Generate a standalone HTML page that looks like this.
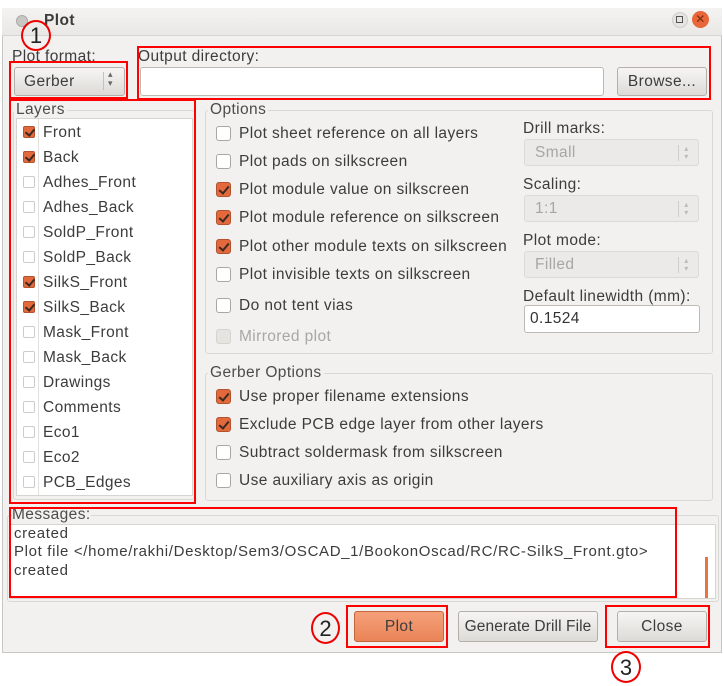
<!DOCTYPE html>
<html><head><meta charset="utf-8"><style>
*{box-sizing:border-box;margin:0;padding:0}
body{width:724px;height:686px;background:#fff;position:relative;overflow:hidden;font-family:"Liberation Sans","DejaVu Sans",sans-serif;font-size:15.5px;letter-spacing:0.4px;color:#3c3c3c}
.a{position:absolute}
.t{position:absolute;white-space:nowrap;line-height:18px}
.win{left:2px;top:8px;width:720px;height:645px;background:#f2f1f0;border:1px solid #c8c6c2}
.title{left:2px;top:8px;width:720px;height:28px;background:linear-gradient(#f4f3f1,#e9e8e5);border-bottom:1px solid #d6d4d0}
.red{position:absolute;border:2px solid #f00}
.circ{position:absolute;border:2px solid #e00;border-radius:50%;background:transparent;font-size:22px;letter-spacing:0;color:#222;text-align:center;font-family:"Liberation Sans",sans-serif}
.btn{position:absolute;border:1px solid #b3b0ab;border-radius:3px;background:linear-gradient(#f6f5f4,#dddbd7);text-align:center;line-height:28px;color:#3c3c3c}
.inp{position:absolute;background:#fff;border:1px solid #bdbab5;border-radius:3px}
.frame{position:absolute;border:1px solid #dad8d4;border-radius:3px}
.lbl{position:absolute;background:#f2f1f0;padding:0 2px;line-height:16px;color:#4c4c4c}
.cb{position:absolute;width:15px;height:15px;border:1px solid #aaa7a2;border-radius:3px;background:#fff}
.cb.on{background:#e3683c;border-color:#b2532d}
.cb.on::after{content:"";position:absolute;left:4px;top:1px;width:4px;height:8px;border:solid #3a2a22;border-width:0 2px 2px 0;transform:rotate(40deg)}
.sc{position:absolute;width:12px;height:12px;border:1px solid #ccc;border-radius:2px;background:#fff}
.sc.on{background:#e3683c;border-color:#b2532d}
.sc.on::after{content:"";position:absolute;left:3px;top:0px;width:4px;height:7px;border:solid #3a2a22;border-width:0 2px 2px 0;transform:rotate(40deg)}
.combo{position:absolute;border:1px solid #dcdad6;border-radius:3px;background:#ebeae8;color:#a8a6a2;line-height:26px;padding-left:10px}
.combo i{position:absolute;right:4px;top:5px;height:16px;border-left:1px solid #d0cecb;width:16px;font-style:normal;font-size:8px;line-height:8px;text-align:center;color:#bbb}
</style></head><body>
<div class="a win"></div>
<div class="a title"></div>
<div class="a" style="left:16px;top:15px;width:12px;height:12px;border-radius:50%;background:#c9c7c3;border:1px solid #aaa"></div>
<div class="t" style="left:44px;top:12px;font-weight:bold;color:#3c3c3c">Plot</div>
<div class="a" style="left:672px;top:12px;width:16px;height:16px;border-radius:50%;background:#e6e4e0;border:1px solid #ccc"></div>
<div class="a" style="left:676px;top:16px;width:7px;height:7px;border:1px solid #555"></div>
<div class="a" style="left:692px;top:11px;width:17px;height:17px;border-radius:50%;background:#e8663a;color:#7a2b10;font-size:12px;line-height:17px;text-align:center">✕</div>

<div class="t" style="left:12px;top:48px">Plot format:</div>
<div class="btn" style="left:14px;top:67px;width:111px;height:29px;text-align:left;padding-left:9px">Gerber</div>
<div class="a" style="left:103px;top:72px;height:18px;border-left:1px solid #c4c2be"></div>
<div class="t" style="left:108px;top:70px;font-size:9px;line-height:9px;color:#666">▴<br>▾</div>

<div class="t" style="left:138px;top:48px">Output directory:</div>
<div class="inp" style="left:140px;top:67px;width:464px;height:29px"></div>
<div class="btn" style="left:617px;top:67px;width:90px;height:29px">Browse...</div>

<div class="frame" style="left:13px;top:110px;width:182px;height:390px"></div>
<div class="lbl" style="left:14px;top:102px">Layers</div>
<div class="a" style="left:16px;top:118px;width:177px;height:378px;background:#fff;border:1px solid #d6d4d0"></div>
<div class="a" style="left:38px;top:119px;height:376px;border-left:1px solid #e3e1de"></div>
<div class="sc on" style="left:23px;top:126px"></div><div class="t" style="left:43px;top:124px">Front</div>
<div class="sc on" style="left:23px;top:151px"></div><div class="t" style="left:43px;top:149px">Back</div>
<div class="sc" style="left:23px;top:176px"></div><div class="t" style="left:43px;top:174px">Adhes_Front</div>
<div class="sc" style="left:23px;top:201px"></div><div class="t" style="left:43px;top:199px">Adhes_Back</div>
<div class="sc" style="left:23px;top:226px"></div><div class="t" style="left:43px;top:224px">SoldP_Front</div>
<div class="sc" style="left:23px;top:251px"></div><div class="t" style="left:43px;top:249px">SoldP_Back</div>
<div class="sc on" style="left:23px;top:276px"></div><div class="t" style="left:43px;top:274px">SilkS_Front</div>
<div class="sc on" style="left:23px;top:301px"></div><div class="t" style="left:43px;top:299px">SilkS_Back</div>
<div class="sc" style="left:23px;top:326px"></div><div class="t" style="left:43px;top:324px">Mask_Front</div>
<div class="sc" style="left:23px;top:351px"></div><div class="t" style="left:43px;top:349px">Mask_Back</div>
<div class="sc" style="left:23px;top:376px"></div><div class="t" style="left:43px;top:374px">Drawings</div>
<div class="sc" style="left:23px;top:401px"></div><div class="t" style="left:43px;top:399px">Comments</div>
<div class="sc" style="left:23px;top:426px"></div><div class="t" style="left:43px;top:424px">Eco1</div>
<div class="sc" style="left:23px;top:451px"></div><div class="t" style="left:43px;top:449px">Eco2</div>
<div class="sc" style="left:23px;top:476px"></div><div class="t" style="left:43px;top:474px">PCB_Edges</div>

<div class="frame" style="left:205px;top:110px;width:508px;height:244px"></div>
<div class="lbl" style="left:208px;top:102px">Options</div>
<div class="cb" style="left:216px;top:126px"></div><div class="t" style="left:239px;top:125px">Plot sheet reference on all layers</div>
<div class="cb" style="left:216px;top:154px"></div><div class="t" style="left:239px;top:153px">Plot pads on silkscreen</div>
<div class="cb on" style="left:216px;top:182px"></div><div class="t" style="left:239px;top:181px">Plot module value on silkscreen</div>
<div class="cb on" style="left:216px;top:210px"></div><div class="t" style="left:239px;top:209px">Plot module reference on silkscreen</div>
<div class="cb on" style="left:216px;top:239px"></div><div class="t" style="left:239px;top:238px">Plot other module texts on silkscreen</div>
<div class="cb" style="left:216px;top:267px"></div><div class="t" style="left:239px;top:266px">Plot invisible texts on silkscreen</div>
<div class="cb" style="left:216px;top:298px"></div><div class="t" style="left:239px;top:297px">Do not tent vias</div>
<div class="cb" style="left:216px;top:329px;background:#e6e4e1;border-color:#d6d4d0"></div><div class="t" style="left:239px;top:328px;color:#a9a7a3">Mirrored plot</div>

<div class="t" style="left:523px;top:120px">Drill marks:</div>
<div class="combo" style="left:524px;top:139px;width:175px;height:27px">Small<i>▴<br>▾</i></div>
<div class="t" style="left:523px;top:176px">Scaling:</div>
<div class="combo" style="left:524px;top:195px;width:175px;height:27px">1:1<i>▴<br>▾</i></div>
<div class="t" style="left:523px;top:232px">Plot mode:</div>
<div class="combo" style="left:524px;top:251px;width:175px;height:27px">Filled<i>▴<br>▾</i></div>
<div class="t" style="left:523px;top:288px">Default linewidth (mm):</div>
<div class="inp" style="left:524px;top:305px;width:176px;height:28px;padding-left:5px;line-height:26px;color:#333">0.1524</div>

<div class="frame" style="left:205px;top:373px;width:508px;height:128px"></div>
<div class="lbl" style="left:208px;top:365px">Gerber Options</div>
<div class="cb on" style="left:216px;top:389px"></div><div class="t" style="left:239px;top:388px">Use proper filename extensions</div>
<div class="cb on" style="left:216px;top:417px"></div><div class="t" style="left:239px;top:416px">Exclude PCB edge layer from other layers</div>
<div class="cb" style="left:216px;top:445px"></div><div class="t" style="left:239px;top:444px">Subtract soldermask from silkscreen</div>
<div class="cb" style="left:216px;top:473px"></div><div class="t" style="left:239px;top:472px">Use auxiliary axis as origin</div>

<div class="frame" style="left:7px;top:515px;width:712px;height:87px"></div>
<div class="lbl" style="left:12px;top:507px;padding:0">Messages:</div>
<div class="a" style="left:10px;top:524px;width:706px;height:75px;background:#fff;border:1px solid #d6d4d0"></div>
<div class="a" style="left:705px;top:557px;width:3px;height:41px;background:#e8743f"></div>
<div class="t" style="left:14px;top:525px;font-size:15px;letter-spacing:0.65px">created</div>
<div class="t" style="left:14px;top:543px;font-size:15px;letter-spacing:0.65px">Plot file &lt;/home/rakhi/Desktop/Sem3/OSCAD_1/BookonOscad/RC/RC-SilkS_Front.gto&gt;</div>
<div class="t" style="left:14px;top:562px;font-size:15px;letter-spacing:0.65px">created</div>

<div class="btn" style="left:354px;top:611px;width:90px;height:31px;background:linear-gradient(#f5a07a,#ea8457);border-color:#c4653e;line-height:30px">Plot</div>
<div class="btn" style="left:458px;top:611px;width:140px;height:31px;line-height:30px;letter-spacing:0.1px">Generate Drill File</div>
<div class="btn" style="left:617px;top:611px;width:90px;height:31px;line-height:30px">Close</div>

<div class="red" style="left:9px;top:61px;width:119px;height:38px"></div>
<div class="red" style="left:137px;top:46px;width:574px;height:54px"></div>
<div class="red" style="left:9px;top:99px;width:187px;height:405px"></div>
<div class="red" style="left:9px;top:507px;width:668px;height:91px"></div>
<div class="red" style="left:346px;top:605px;width:102px;height:43px"></div>
<div class="red" style="left:605px;top:605px;width:105px;height:43px"></div>
<div class="circ" style="left:21px;top:20px;width:30px;height:31px;line-height:28px">1</div>
<div class="circ" style="left:311px;top:612px;width:29px;height:32px;line-height:29px">2</div>
<div class="circ" style="left:611px;top:651px;width:30px;height:32px;line-height:29px">3</div>
</body></html>
